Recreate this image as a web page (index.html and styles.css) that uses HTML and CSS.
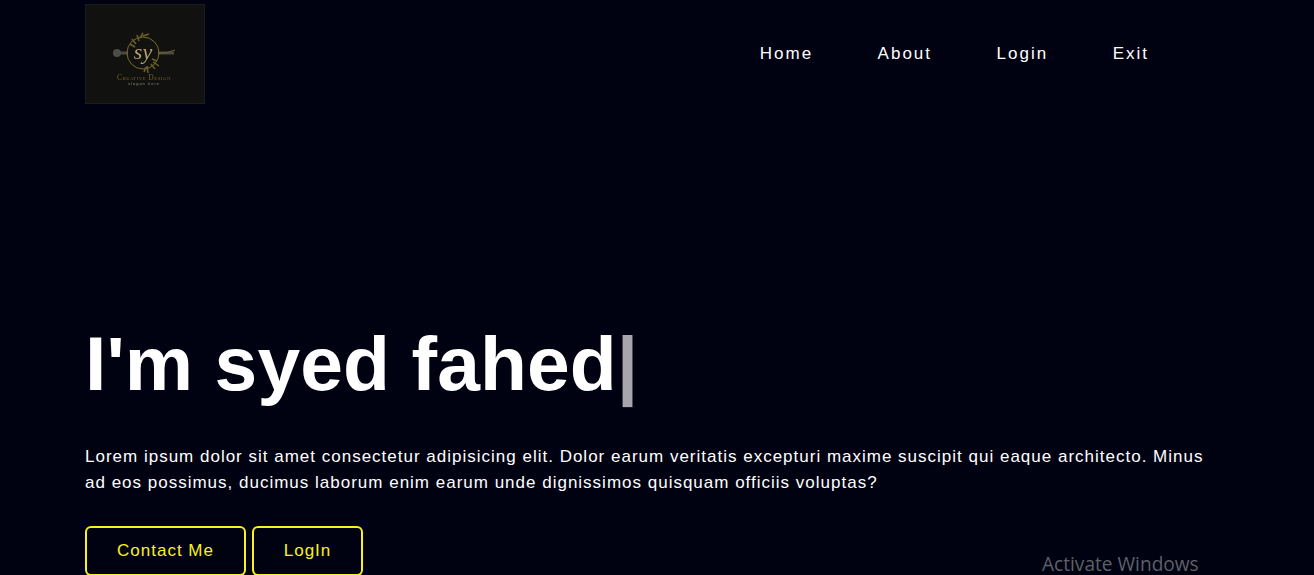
FILE: index.html
```html
<!DOCTYPE html>
<html lang="en">
<head>
  <meta charset="UTF-8" />
  <meta name="viewport" content="width=device-width, initial-scale=1.0" />
  <title>Syed Fahed</title>
  <link rel="stylesheet" href="styles.css">
</head>
<body>
  <header class="top-bar">
    <div class="logo">
      <svg class="logo-mark" width="118" height="50" viewBox="0 0 118 50" fill="none">
        <!-- key shaft behind the ring -->
        <path d="M30 31H42M72 31H88" stroke="#4a4a42" stroke-width="3"/>
        <circle cx="31" cy="31" r="4" fill="#4d4d45"/>
        <path d="M72 31Q80 32 89 28" stroke="#6e6230" stroke-width="1"/>
        <circle cx="57" cy="31" r="16" stroke="#7d6c2c" stroke-width="1"/>
        <!-- leaves -->
        <path d="M44 22l5 3M46 17l4 5M51 13l2 6M57 11l-3 5M63 12l-6 2" stroke="#6f6126" stroke-width="1.5"/>
        <path d="M71 39l-5-2M73 44l-6-4M69 47l-4-5M62 51l-1-7M58 50l2-5" stroke="#6f6126" stroke-width="1.5"/>
        <text x="57" y="37" class="logo-initials">sy</text>
      </svg>
      <span class="logo-title">Creative Design</span>
      <span class="logo-slogan">slogan here</span>
    </div>
    <nav class="main-nav">
      <a href="#">Home</a>
      <a href="#">About</a>
      <a href="#">Login</a>
      <a href="#">Exit</a>
    </nav>
  </header>

  <main class="hero">
    <h1>I'm syed fahed<span class="cursor">|</span></h1>
    <p>Lorem ipsum dolor sit amet consectetur adipisicing elit. Dolor earum veritatis excepturi maxime suscipit qui eaque architecto. Minus ad eos possimus, ducimus laborum enim earum unde dignissimos quisquam officiis voluptas?</p>
    <div class="actions">
      <a class="btn btn-contact" href="#">Contact Me</a>
      <a class="btn btn-login" href="#">LogIn</a>
    </div>
  </main>

  <div class="activate">Activate Windows</div>
</body>
</html>
```

FILE: styles.css
```css
*, *::before, *::after { box-sizing: border-box; }
html, body { height: 100%; }
body { margin: 0; overflow: hidden; background: #000212; color: #fff; font-family: 'Liberation Sans', Arial, sans-serif; }

/* Header */
.top-bar { display: flex; justify-content: space-between; padding: 4px 165px 0 85px; }
.logo { width: 120px; height: 100px; background: #11110f; border: 1px solid #1c1c1a; display: flex; flex-direction: column; align-items: center; overflow: hidden; }
.logo-mark { flex: none; margin-top: 17px; overflow: visible; filter: blur(0.5px); }
.logo-initials { font-family: 'Liberation Serif', serif; font-style: italic; font-size: 22px; fill: #b5a468; text-anchor: middle; }
.logo-title { font-family: 'Liberation Serif', serif; font-variant: small-caps; font-size: 7.5px; letter-spacing: 0.4px; line-height: 7px; color: #6f6126; margin: 2px 2px 0 0; white-space: nowrap; filter: blur(0.3px); }
.logo-slogan { font-size: 4px; letter-spacing: 1px; line-height: 5px; color: #8c8c80; margin-right: 2px; white-space: nowrap; filter: blur(0.3px); }

.main-nav { display: flex; gap: 64.5px; padding-top: 40px; }
.main-nav a { color: #fff; text-decoration: none; font-size: 17px; letter-spacing: 2px; line-height: 19px; height: 19px; }

/* Hero */
.hero { padding: 218px 100px 0 85px; }
.hero h1 { margin: 0; font-size: 76.8px; line-height: 83px; font-weight: 700; letter-spacing: 0.1px; }
.cursor { color: #a6a6ac; }
.hero p { margin: 39px 0 0; font-size: 17px; line-height: 26px; letter-spacing: 1px; }

.actions { display: flex; gap: 6px; margin-top: 30px; }
.btn { display: flex; align-items: center; justify-content: center; height: 50px; border: 2px solid #f9f21d; border-radius: 6px; color: #f9f21d; text-decoration: none; font-size: 17px; letter-spacing: 1px; }
.btn-contact { width: 161px; }
.btn-login { width: 111px; }

/* Windows watermark */
.activate { position: absolute; left: 1042px; top: 553px; font-family: 'Open Sans', sans-serif; font-size: 19.1px; line-height: 22px; color: #5e6067; white-space: nowrap; }
```
